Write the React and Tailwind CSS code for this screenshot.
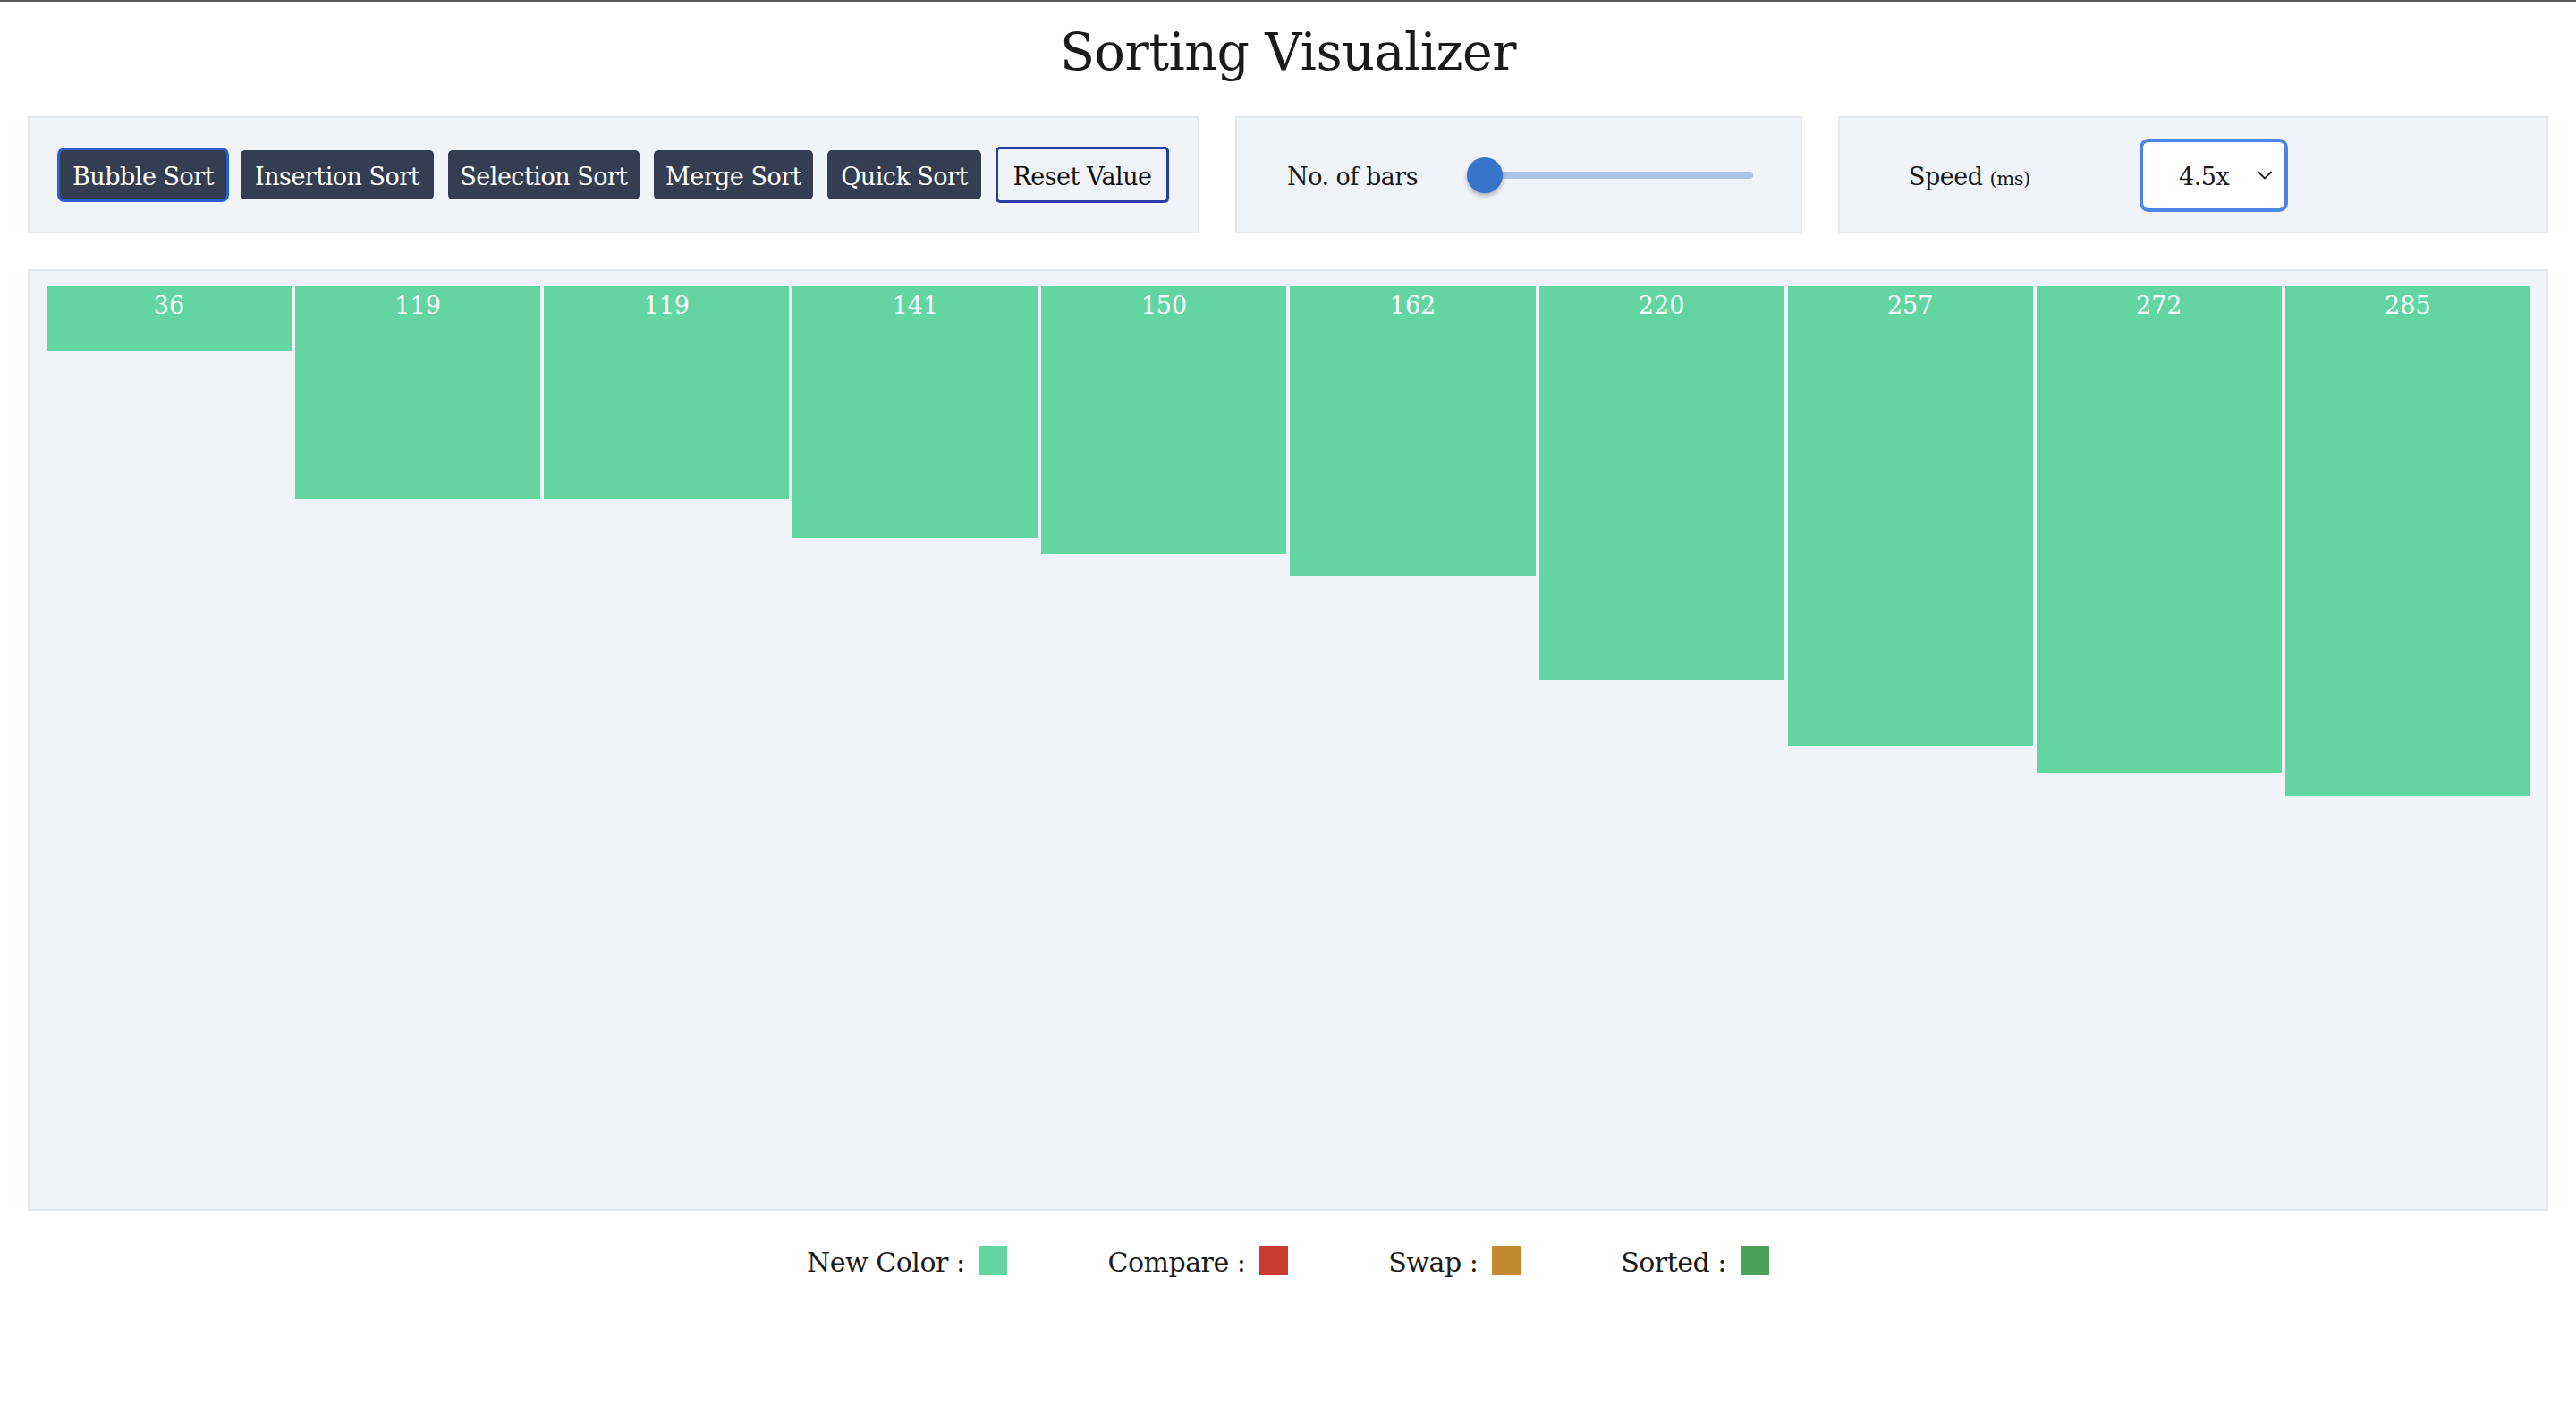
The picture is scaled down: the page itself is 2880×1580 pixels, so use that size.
import { ChevronDown } from 'lucide-react';

const bars = [36, 119, 119, 141, 150, 162, 220, 257, 272, 285];

const algorithms = [
    { name: 'Bubble Sort', width: 'w-[186px]', active: true },
    { name: 'Insertion Sort', width: 'w-[216px]' },
    { name: 'Selection Sort', width: 'w-[214px]' },
    { name: 'Merge Sort', width: 'w-[178px]' },
    { name: 'Quick Sort', width: 'w-[172px]' },
];

const legend = [
    { label: 'New Color :', color: 'bg-[#63d5a0]' },
    { label: 'Compare :', color: 'bg-[#c93a31]' },
    { label: 'Swap :', color: 'bg-[#c28a2f]' },
    { label: 'Sorted :', color: 'bg-[#4ba257]' },
];

export default function App() {
    return (
        <div className="min-h-screen bg-white border-t-2 border-[#5c5c5c] font-['DejaVu_Serif',serif] text-[#1a1a1a]">
            {/* Title */}
            <h1 className="mt-[20px] text-center text-[57px] leading-[72px] tracking-[-0.5px]">Sorting Visualizer</h1>

            {/* Controls */}
            <div className="mt-[36px] flex gap-[40px] px-[31px]">
                <div className="w-[1310px] h-[131px] flex items-center gap-[16px] pl-[34px] bg-[#f0f4f9] border-2 border-[#e4e7eb]">
                    {algorithms.map((a) => (
                        <button
                            key={a.name}
                            className={`${a.width} h-[55px] flex items-center justify-center pt-[6px] rounded-[5px] bg-[#343e53] text-white text-[27px] tracking-[-0.5px] ${a.active ? 'ring-[3px] ring-[#2c5ecf]' : ''}`}
                        >
                            {a.name}
                        </button>
                    ))}
                    <button className="w-[194px] h-[63px] flex items-center justify-center pt-[6px] rounded-[5px] border-[3px] border-[#2a3ca6] text-[27px] tracking-[-0.5px] text-[#111]">
                        Reset Value
                    </button>
                </div>

                <div className="w-[634px] h-[131px] flex items-center gap-[58px] pl-[56px] bg-[#f0f4f9] border-2 border-[#e4e7eb]">
                    <span className="pt-[6px] text-[27px] tracking-[-0.5px] w-[143px] whitespace-nowrap">No. of bars</span>
                    <div className="relative w-[320px] h-[40px] flex items-center">
                        <div className="w-full h-[8px] rounded-full bg-[#abc4e8]" />
                        <div className="absolute left-0 top-0 w-[40px] h-[40px] rounded-full bg-[#3874cc] shadow-[0_3px_5px_rgba(0,0,0,0.3)]" />
                    </div>
                </div>

                <div className="flex-1 h-[131px] flex items-center pl-[77px] bg-[#f0f4f9] border-2 border-[#e4e7eb]">
                    <span className="pt-[6px] w-[258px] text-[27px] tracking-[-0.5px] whitespace-nowrap">
                        Speed <span className="text-[21px]">(ms)</span>
                    </span>
                    <div className="w-[166px] h-[82px] flex items-center justify-between pl-[40px] pr-[8px] bg-white border-4 border-[#4f84e8] rounded-[10px]">
                        <span className="pt-[6px] text-[27px] tracking-[-0.5px]">4.5x</span>
                        <ChevronDown size={28} strokeWidth={1.6} className="text-[#222]" />
                    </div>
                </div>
            </div>

            {/* Bars */}
            <div className="mx-[31px] mt-[40px] h-[1053px] bg-[#f0f4f9] border-2 border-[#e4e7eb] pt-[17px] pl-[19px] pr-[18px]">
                <div className="flex items-start gap-[4px]">
                    {bars.map((v, i) => (
                        <div
                            key={i}
                            className="flex-1 bg-[#63d5a0] text-white text-center text-[27px] leading-none pt-[8px]"
                            style={{ height: v * 2 }}
                        >
                            {v}
                        </div>
                    ))}
                </div>
            </div>

            {/* Legend */}
            <div className="mt-[31px] flex justify-center items-center gap-[112px]">
                {legend.map((l) => (
                    <div key={l.label} className="flex items-center gap-[16px]">
                        <span className="pt-[4px] text-[30px] tracking-[-0.5px]">{l.label}</span>
                        <span className={`w-[32px] h-[33px] ${l.color}`} />
                    </div>
                ))}
            </div>
        </div>
    );
}
